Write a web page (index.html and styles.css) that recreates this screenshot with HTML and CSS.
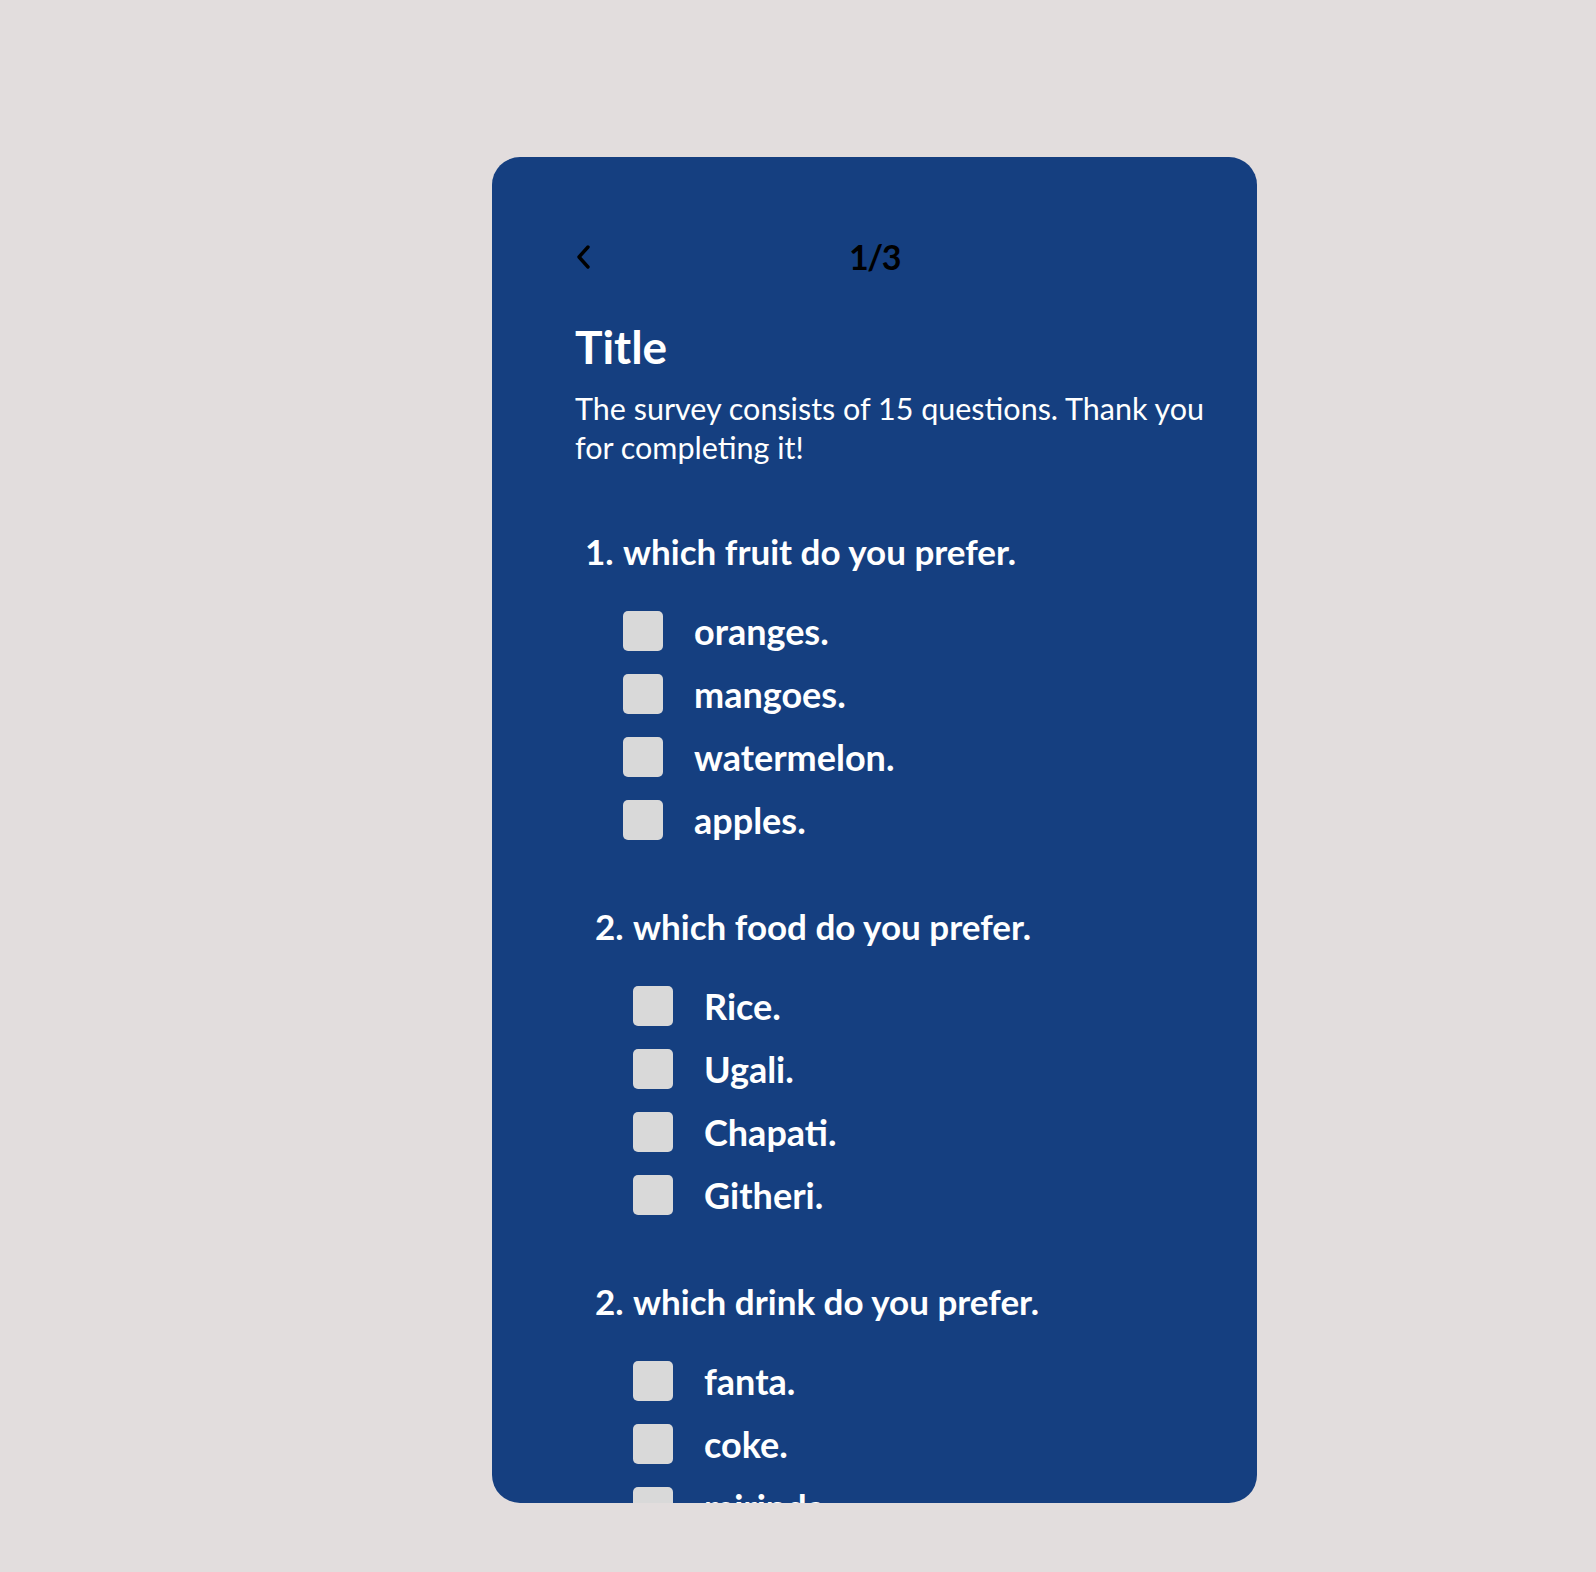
FILE: index.html
```html
<!DOCTYPE html>
<html lang="en">
<head>
<meta charset="utf-8">
<title>Survey</title>
<link rel="stylesheet" href="styles.css">
</head>
<body>
<main class="card">
  <header class="topbar">
    <button class="back" type="button" aria-label="Back">
      <svg width="18" height="26" viewBox="0 0 18 26" aria-hidden="true"><path d="M14 3 L5 13 L14 23" fill="none" stroke="#000" stroke-width="3.4" stroke-linecap="round" stroke-linejoin="round"/></svg>
    </button>
    <span class="progress">1/3</span>
    <span class="spacer"></span>
  </header>

  <h1 class="title">Title</h1>
  <p class="intro">The survey consists of 15 questions. Thank you for completing it!</p>

  <section class="question">
    <h2 class="q-head"><span class="q-num">1.</span><span class="q-text">which fruit do you prefer.</span></h2>
    <ul class="options">
      <li class="option"><span class="box"></span><span class="label">oranges.</span></li>
      <li class="option"><span class="box"></span><span class="label">mangoes.</span></li>
      <li class="option"><span class="box"></span><span class="label">watermelon.</span></li>
      <li class="option"><span class="box"></span><span class="label">apples.</span></li>
    </ul>
  </section>

  <section class="question question-inset">
    <h2 class="q-head"><span class="q-num">2.</span><span class="q-text">which food do you prefer.</span></h2>
    <ul class="options">
      <li class="option"><span class="box"></span><span class="label">Rice.</span></li>
      <li class="option"><span class="box"></span><span class="label">Ugali.</span></li>
      <li class="option"><span class="box"></span><span class="label">Chapati.</span></li>
      <li class="option"><span class="box"></span><span class="label">Githeri.</span></li>
    </ul>
  </section>

  <section class="question question-inset">
    <h2 class="q-head"><span class="q-num">2.</span><span class="q-text">which drink do you prefer.</span></h2>
    <ul class="options">
      <li class="option"><span class="box"></span><span class="label">fanta.</span></li>
      <li class="option"><span class="box"></span><span class="label">coke.</span></li>
      <li class="option"><span class="box"></span><span class="label">mirinda.</span></li>
    </ul>
  </section>
</main>
</body>
</html>
```

FILE: styles.css
```css
* { box-sizing: border-box; }

html, body {
  margin: 0;
  padding: 0;
}

body {
  background: #e2dddd;
  font-family: Lato, "Open Sans", "Liberation Sans", sans-serif;
  min-height: 1572px;
}

.card {
  display: block;
  width: 765px;
  height: 1346px;
  margin: 157px 0 0 492px;
  padding: 0 40px 0 83px;
  background: #153f80;
  border-radius: 28px;
  overflow: hidden;
  color: #ffffff;
}

.topbar {
  display: grid;
  grid-template-columns: 1fr auto 1fr;
  align-items: center;
  height: 40px;
  margin: 80px -40px 0 -83px;
  padding: 0 82px;
}

.back {
  justify-self: start;
  display: flex;
  align-items: center;
  padding: 0;
  border: 0;
  background: none;
  cursor: pointer;
}

.progress {
  color: #000;
  font-size: 34px;
  font-weight: 700;
  letter-spacing: -1.5px;
  line-height: 40px;
}

.title {
  margin: 42px 0 0;
  font-size: 46px;
  font-weight: 700;
  line-height: 56px;
}

.intro {
  margin: 14px 0 0;
  font-size: 30.5px;
  font-weight: 400;
  line-height: 38.5px;
}

.question {
  margin-top: 64px;
  padding-left: 10px;
}

.question + .question {
  margin-top: 65px;
}

.question-inset {
  padding-left: 20px;
}

.q-head {
  display: flex;
  margin: 0;
  font-size: 35px;
  font-weight: 700;
  line-height: 42px;
}

.q-num {
  width: 38px;
  flex: none;
}

.options {
  list-style: none;
  margin: 39px 0 0;
  padding: 0 0 0 38px;
  display: flex;
  flex-direction: column;
  gap: 23px;
}

.option {
  display: flex;
  align-items: center;
  gap: 31px;
  height: 40px;
}

.box {
  width: 40px;
  height: 40px;
  flex: none;
  background: #d9d9d9;
  border-radius: 5px;
}

.label {
  font-size: 36px;
  font-weight: 700;
  line-height: 40px;
}
```
